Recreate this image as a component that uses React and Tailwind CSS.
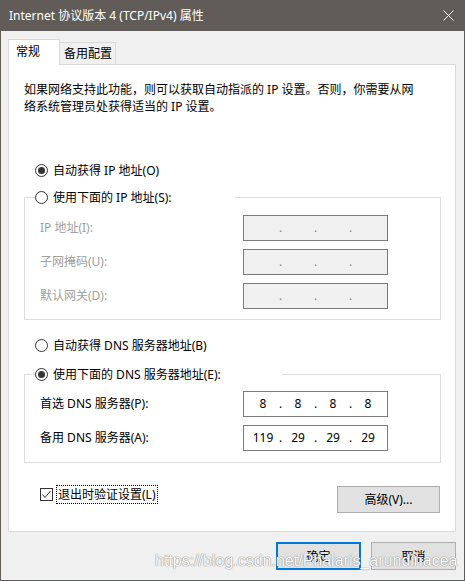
import React from 'react'

const ui = "font-['Noto_Sans','Noto_Sans_CJK_SC',sans-serif]"

function Radio({ checked, children }) {
    return (
        <div className="flex items-center h-[17px] gap-[5px] bg-white">
            <span className="w-[13px] h-[13px] rounded-full border border-[#333] bg-white flex items-center justify-center shrink-0">
                {checked && <span className="w-[7px] h-[7px] rounded-full bg-[#333]"></span>}
            </span>
            <span className="leading-[17px] whitespace-nowrap">{children}</span>
        </div>
    )
}

function IpBox({ values, disabled }) {
    return (
        <div className={`w-[145px] h-[26px] border border-[#7a7a7a] flex items-center pl-[5px] ${disabled ? 'bg-[#f0f0f0]' : 'bg-white'}`}>
            {[0, 1, 2, 3].map((i) => (
                <React.Fragment key={i}>
                    {i > 0 && <span className={`w-[7px] text-center ${disabled ? 'text-[#8a8a8a]' : 'text-black'}`}>.</span>}
                    <span className="w-[28px] text-center">{values ? values[i] : ''}</span>
                </React.Fragment>
            ))}
        </div>
    )
}

function Row({ label, disabled, values }) {
    return (
        <div className="grid grid-cols-[203px_145px] items-center h-[26px]">
            <span className={disabled ? 'text-[#a0a0a0]' : 'text-black'}>{label}</span>
            <IpBox values={values} disabled={disabled} />
        </div>
    )
}

export default function App() {
    return (
        <div className={`${ui} relative w-[465px] h-[581px] flex flex-col bg-[#f0f0f0] border-x border-b border-[#5f5b57] text-[12px] text-black`}>
            <header className="h-[31px] -mx-px bg-[#615c58] flex items-center justify-between pl-[9px] pr-[10px] text-white shrink-0">
                <span className="leading-[17px]">Internet 协议版本 4 (TCP/IPv4) 属性</span>
                <svg width="11" height="11" viewBox="0 0 11 11" className="mr-[1px]">
                    <path d="M0.5 0.5L10.5 10.5M10.5 0.5L0.5 10.5" stroke="#ffffff" strokeWidth="1" />
                </svg>
            </header>

            <div className="flex-1 pl-[7px]">
                <div className="flex items-end mt-[8px]">
                    <div className="relative z-10 -mb-px h-[26px] w-[52px] bg-white border-l border-t border-r border-[#d9d9d9] pl-[7px] pt-[3px] leading-[17px]">常规</div>
                    <div className="h-[22px] w-[56px] border-t border-r border-[#d9d9d9] pl-[4px] pt-[2px] leading-[17px]">备用配置</div>
                </div>

                <section className="w-[448px] bg-white border border-[#d9d9d9] pl-[15px] pr-[14px] pt-[16px] pb-[18px]">
                    <p className="leading-[17px] whitespace-nowrap">
                        如果网络支持此功能，则可以获取自动指派的 IP 设置。否则，你需要从网<br />
                        络系统管理员处获得适当的 IP 设置。
                    </p>

                    <div className="mt-[47px] ml-[11px]">
                        <Radio checked>自动获得 IP 地址(O)</Radio>
                    </div>

                    <fieldset className="mt-[10px] border border-[#dcdcdc] pl-[10px] pt-[9px] pb-[10px]">
                        <legend className="w-[200px]">
                            <Radio>使用下面的 IP 地址(S):</Radio>
                        </legend>
                        <div className="pl-[5px] flex flex-col gap-[8px]">
                            <Row label="IP 地址(I):" disabled />
                            <Row label="子网掩码(U):" disabled />
                            <Row label="默认网关(D):" disabled />
                        </div>
                    </fieldset>

                    <div className="mt-[17px] ml-[11px]">
                        <Radio>自动获得 DNS 服务器地址(B)</Radio>
                    </div>

                    <fieldset className="mt-[12px] border border-[#dcdcdc] pl-[10px] pt-[8px] pb-[11px]">
                        <legend className="w-[247px]">
                            <Radio checked>使用下面的 DNS 服务器地址(E):</Radio>
                        </legend>
                        <div className="pl-[5px] flex flex-col gap-[8px]">
                            <Row label="首选 DNS 服务器(P):" values={['8', '8', '8', '8']} />
                            <Row label="备用 DNS 服务器(A):" values={['119', '29', '29', '29']} />
                        </div>
                    </fieldset>

                    <div className="mt-[22px] flex items-start justify-between pl-[16px] pr-[1px]">
                        <label className="flex items-center h-[19px] gap-[3px]">
                            <span className="w-[13px] h-[13px] border border-[#333] bg-white flex items-center justify-center">
                                <svg width="11" height="11" viewBox="0 0 11 11">
                                    <path d="M1.5 5.5L4 8.5L9.5 2" fill="none" stroke="#333" strokeWidth="1" />
                                </svg>
                            </span>
                            <span className="h-[19px] border border-dotted border-black px-px leading-[17px]">退出时验证设置(L)</span>
                        </label>
                        <button className="mt-px w-[103px] h-[27px] bg-[#e1e1e1] border border-[#adadad] leading-[17px]">高级(V)...</button>
                    </div>
                </section>

                <div className="mt-[10px] w-[448px] flex justify-end gap-[10px]">
                    <button className="w-[85px] h-[28px] bg-[#e1e1e1] border-2 border-[#0078d7] leading-[17px]">确定</button>
                    <button className="w-[85px] h-[28px] bg-[#e1e1e1] border border-[#adadad] leading-[17px]">取消</button>
                </div>
            </div>

            <span className="absolute left-[154px] top-[553px] font-['Liberation_Sans',Arial,sans-serif] text-[16px] leading-[16px] text-[#fafafa] [text-shadow:0_0_1px_#7a7a7a,0_0_1px_#9a9a9a] whitespace-nowrap pointer-events-none">
                https://blog.csdn.net/Phalaris_arundinacea
            </span>
        </div>
    )
}
